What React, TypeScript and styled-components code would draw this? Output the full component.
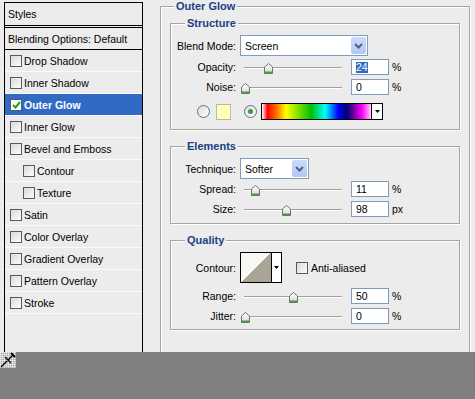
import styled, { createGlobalStyle } from "styled-components";

const GlobalStyle = createGlobalStyle`
	html, body {
		margin: 0;
		padding: 0;
		background: #ececec;
	}
	body {
		font-family: "Liberation Sans", Arial, sans-serif;
		font-size: 10.5px;
		color: #000;
	}
`;

const styleItems = [
	{ label: "Drop Shadow" },
	{ label: "Inner Shadow" },
	{ label: "Outer Glow", checked: true, selected: true },
	{ label: "Inner Glow" },
	{ label: "Bevel and Emboss" },
	{ label: "Contour", indent: true },
	{ label: "Texture", indent: true },
	{ label: "Satin" },
	{ label: "Color Overlay" },
	{ label: "Gradient Overlay" },
	{ label: "Pattern Overlay" },
	{ label: "Stroke" },
];

function Chevron() {
	return (
		<svg width="9" height="6" viewBox="0 0 9 6">
			<path d="M1 1 L4.5 4.5 L8 1" fill="none" stroke="#4d6185" strokeWidth="2" />
		</svg>
	);
}

function Thumb() {
	return (
		<svg width="9" height="11" viewBox="0 0 9 11">
			<defs>
				<linearGradient id="tg" x1="0" y1="0" x2="0" y2="1">
					<stop offset="0" stopColor="#ffffff" />
					<stop offset="1" stopColor="#d8d8d0" />
				</linearGradient>
			</defs>
			<path d="M0.5 10.5 V4 L4.5 0.5 L8.5 4 V10.5 Z" fill="url(#tg)" stroke="#707070" />
			<rect x="1" y="8.5" width="7" height="1.5" fill="#3ea53a" />
		</svg>
	);
}

function TinyArrow() {
	return (
		<svg width="5" height="3" viewBox="0 0 5 3">
			<path d="M0 0 H5 L2.5 3 Z" fill="#000" />
		</svg>
	);
}

function Check() {
	return (
		<svg width="9" height="8" viewBox="0 0 9 8">
			<path d="M1 4 L3.5 6.5 L8 1" fill="none" stroke="#21a121" strokeWidth="2" />
		</svg>
	);
}

function PickerCursor() {
	return (
		<svg width="16" height="16" viewBox="0 0 16 16">
			<defs>
				<pattern id="dither" width="2" height="2" patternUnits="userSpaceOnUse">
					<rect width="2" height="2" fill="#d0d0d0" />
					<rect width="1" height="1" fill="#f4f4f4" />
					<rect x="1" y="1" width="1" height="1" fill="#a8a8a8" />
				</pattern>
			</defs>
			<rect width="16" height="16" fill="url(#dither)" />
			<path d="M1 15 L7 9 M5 5 L11 11 M8 8 L13 3" stroke="#000" strokeWidth="1.4" fill="none" />
			<path d="M11 1 L15 5" stroke="#000" strokeWidth="2" />
		</svg>
	);
}

type SliderRowProps = {
	label: string;
	value: string;
	thumb: number;
	unit?: string;
	highlight?: boolean;
	top: number;
};

function SliderRow({ label, value, thumb, unit = "%", highlight, top }: SliderRowProps) {
	return (
		<Row $top={top} $h={16}>
			<FieldLabel>{label}</FieldLabel>
			<Slider>
				<Track />
				<ThumbSpot style={{ left: thumb - 4 }}>
					<Thumb />
				</ThumbSpot>
			</Slider>
			<NumberBox>{highlight ? <Selected>{value}</Selected> : value}</NumberBox>
			<Unit>{unit}</Unit>
		</Row>
	);
}

export default function App() {
	return (
		<Page>
			<GlobalStyle />
			<Main>
				<StylesPanel>
					<PanelHeader>Styles</PanelHeader>
					<BlendingRow>Blending Options: Default</BlendingRow>
					{styleItems.map((item) => (
						<StyleRow key={item.label} $indent={item.indent} $selected={item.selected}>
							<CheckBox $checked={item.checked}>{item.checked && <Check />}</CheckBox>
							{item.label}
						</StyleRow>
					))}
				</StylesPanel>

				<RightArea>
					<Group $outer>
						<Legend $inset={4}>Outer Glow</Legend>

						<Group $pb={9}>
							<Legend $inset={14}>Structure</Legend>
							<Row $top={0} $h={21}>
								<FieldLabel>Blend Mode:</FieldLabel>
								<Select $w={128}>
									<SelectText>Screen</SelectText>
									<SelectButton>
										<Chevron />
									</SelectButton>
								</Select>
							</Row>
							<SliderRow label="Opacity:" value="24" thumb={28} highlight top={3} />
							<SliderRow label="Noise:" value="0" thumb={5} top={4} />
							<ColorRow>
								<Radio />
								<Swatch />
								<Radio $on>
									<RadioDot />
								</Radio>
								<GradientBox />
								<ArrowBox>
									<TinyArrow />
								</ArrowBox>
							</ColorRow>
						</Group>

						<Group $pb={6}>
							<Legend $inset={14}>Elements</Legend>
							<Row $top={0} $h={21}>
								<FieldLabel>Technique:</FieldLabel>
								<Select $w={69}>
									<SelectText>Softer</SelectText>
									<SelectButton>
										<Chevron />
									</SelectButton>
								</Select>
							</Row>
							<SliderRow label="Spread:" value="11" thumb={15} top={2} />
							<SliderRow label="Size:" value="98" thumb={46} unit="px" top={4} />
						</Group>

						<Group $pb={5}>
							<Legend $inset={14}>Quality</Legend>
							<Row $top={0} $h={31}>
								<FieldLabel>Contour:</FieldLabel>
								<ContourBox />
								<ContourArrow>
									<TinyArrow />
								</ContourArrow>
								<AntiAlias>
									<CheckBox />
									<span>Anti-aliased</span>
								</AntiAlias>
							</Row>
							<SliderRow label="Range:" value="50" thumb={53} top={5} />
							<SliderRow label="Jitter:" value="0" thumb={5} top={4} />
						</Group>
					</Group>
				</RightArea>
			</Main>
			<BottomBar>
				<PickerCursor />
			</BottomBar>
		</Page>
	);
}

const Page = styled.div`
	width: 475px;
	height: 399px;
	display: flex;
	flex-direction: column;
	overflow: hidden;
`;

const Main = styled.div`
	height: 352px;
	flex: none;
	display: flex;
	overflow: hidden;
	background: #ececec;
`;

const StylesPanel = styled.div`
	margin: 2px 0 0 4px;
	width: 137px;
	flex: none;
	border: 1px solid #000;
	border-bottom: none;
	display: flex;
	flex-direction: column;
`;

const PanelHeader = styled.div`
	height: 22px;
	display: flex;
	align-items: center;
	padding-left: 3px;
	border-bottom: 3px double #000;
`;

const BlendingRow = styled.div`
	height: 21px;
	display: flex;
	align-items: center;
	padding-left: 3px;
	border-bottom: 1px solid #000;
`;

const StyleRow = styled.div<{ $indent?: boolean; $selected?: boolean }>`
	height: 21px;
	display: flex;
	align-items: center;
	padding-left: ${({ $indent }) => ($indent ? 18 : 5)}px;
	border-bottom: 1px solid #fafafa;
	background: ${({ $selected }) => ($selected ? "#316ac5" : "transparent")};
	color: ${({ $selected }) => ($selected ? "#fff" : "#000")};
	font-weight: ${({ $selected }) => ($selected ? "bold" : "normal")};
`;

const CheckBox = styled.span<{ $checked?: boolean }>`
	width: 12px;
	height: 12px;
	box-sizing: border-box;
	flex: none;
	margin-right: 2px;
	border: 1px solid #4b5d72;
	background: ${({ $checked }) =>
		$checked ? "#fff" : "linear-gradient(135deg, #dcdcd6, #fbfbf9)"};
	display: flex;
	align-items: center;
	justify-content: center;
`;

const RightArea = styled.div`
	flex: 1;
	padding: 0 5px 0 17px;
`;

const Group = styled.fieldset<{ $outer?: boolean; $pb?: number }>`
	margin: 0 0 ${({ $outer }) => ($outer ? 0 : 10)}px 0;
	min-width: 0;
	border: 1px solid #a4a4a4;
	box-shadow: inset 1px 1px 0 #fff, 1px 1px 0 #fff;
	padding: ${({ $outer, $pb }) => ($outer ? "5px 9px 0 9px" : `6px 0 ${$pb}px 0`)};
	height: ${({ $outer }) => ($outer ? "400px" : "auto")};
	box-sizing: border-box;
`;

const Legend = styled.legend<{ $inset: number }>`
	margin-left: ${({ $inset }) => $inset}px;
	padding: 0 2px;
	font-weight: bold;
	font-size: 11px;
	line-height: 12px;
	color: #1b3f84;
	background: #ececec;
`;

const Row = styled.div<{ $top: number; $h: number }>`
	display: flex;
	align-items: center;
	height: ${({ $h }) => $h}px;
	margin-top: ${({ $top }) => $top}px;
`;

const FieldLabel = styled.span`
	width: 65px;
	flex: none;
	text-align: right;
	margin-right: 4px;
	white-space: nowrap;
`;

const Select = styled.div<{ $w: number }>`
	width: ${({ $w }) => $w}px;
	height: 21px;
	box-sizing: border-box;
	border: 1px solid #7f9db9;
	background: #fff;
	display: flex;
	align-items: center;
	padding: 1px;
`;

const SelectText = styled.span`
	flex: 1;
	padding-left: 3px;
`;

const SelectButton = styled.span`
	width: 15px;
	height: 17px;
	border-radius: 2px;
	background: linear-gradient(#cbdafc, #b3c7f4);
	display: flex;
	align-items: center;
	justify-content: center;
`;

const Slider = styled.div`
	position: relative;
	width: 106px;
	height: 16px;
	flex: none;
	margin-right: 5px;
`;

const Track = styled.div`
	position: absolute;
	left: 4px;
	right: 4px;
	top: 8px;
	height: 1px;
	background: #a0a0a0;
	border-bottom: 1px solid #fff;
`;

const ThumbSpot = styled.span`
	position: absolute;
	top: 4px;
	display: flex;
`;

const NumberBox = styled.div`
	width: 38px;
	height: 16px;
	box-sizing: border-box;
	border: 1px solid #7f9db9;
	background: #fff;
	padding-left: 4px;
	display: flex;
	align-items: center;
`;

const Selected = styled.span`
	background: #316ac5;
	color: #fff;
	line-height: 11px;
`;

const Unit = styled.span`
	margin-left: 3px;
`;

const ColorRow = styled.div`
	display: flex;
	align-items: center;
	height: 17px;
	margin-top: 8px;
	padding-left: 26px;
`;

const Radio = styled.span<{ $on?: boolean }>`
	width: 13px;
	height: 13px;
	box-sizing: border-box;
	border-radius: 50%;
	border: 1px solid #5a6f8c;
	background: linear-gradient(135deg, #dcdcd6, #ffffff);
	display: flex;
	align-items: center;
	justify-content: center;
	margin-right: ${({ $on }) => ($on ? 4 : 6)}px;
	flex: none;
`;

const RadioDot = styled.span`
	width: 5px;
	height: 5px;
	border-radius: 50%;
	background: #3c9b32;
`;

const Swatch = styled.span`
	width: 15px;
	height: 16px;
	box-sizing: border-box;
	border: 1px solid #b8b8a8;
	background: #ffffb8;
	margin-right: 13px;
	flex: none;
`;

const GradientBox = styled.span`
	width: 111px;
	height: 17px;
	box-sizing: border-box;
	border: 1px solid #000;
	background: linear-gradient(
		to right,
		#ffffff 0%,
		#ff0000 5%,
		#ff7a00 14%,
		#ffff00 22%,
		#00c000 45%,
		#00ffff 58%,
		#0000ff 70%,
		#000070 78%,
		#7000a0 84%,
		#ff00ff 92%,
		#ffd0f0 100%
	);
	flex: none;
`;

const ArrowBox = styled.span`
	width: 11px;
	height: 17px;
	box-sizing: border-box;
	border: 1px solid #000;
	border-left: none;
	background: #fff;
	display: flex;
	align-items: center;
	justify-content: center;
	flex: none;
`;

const ContourBox = styled.span`
	width: 32px;
	height: 31px;
	box-sizing: border-box;
	border: 1px solid #000;
	background: linear-gradient(to bottom right, #f7f7f3 50%, #a9a496 50%);
	flex: none;
`;

const ContourArrow = styled.span`
	width: 10px;
	height: 31px;
	box-sizing: border-box;
	border: 1px solid #000;
	border-left: none;
	background: #fff;
	display: flex;
	align-items: center;
	justify-content: center;
	flex: none;
`;

const AntiAlias = styled.label`
	display: flex;
	align-items: center;
	gap: 1px;
	margin-left: 14px;
`;

const BottomBar = styled.div`
	flex: 1;
	background: #808080;
	display: flex;
	align-items: flex-start;
`;
